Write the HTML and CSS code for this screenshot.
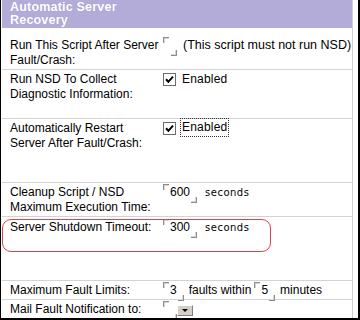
FILE: index.html
```html
<!DOCTYPE html>
<html lang="en">
<head>
    <meta charset="UTF-8">
    <title>Automatic Server Recovery</title>
    <link rel="stylesheet" href="styles.css">
</head>
<body>
    <div class="frame">
        <div class="panel">
            <div class="hd">Automatic Server<br>Recovery</div>

            <div class="row r1">
                <div class="lbl">Run This Script After Server<br>Fault/Crash:</div>
                <div class="val"><span class="fld"></span><span class="note">(This script must not run NSD)</span></div>
            </div>

            <div class="row r2">
                <div class="lbl">Run NSD To Collect<br>Diagnostic Information:</div>
                <div class="val">
                    <svg class="chk" width="13" height="13" viewBox="0 0 13 13"><rect x="0.5" y="0.5" width="12" height="12" fill="#fff" stroke="#6d6d6d"/><path d="M3 6.2 L5.4 8.8 L10 3.6" fill="none" stroke="#000" stroke-width="2"/></svg>
                    <span class="opt">Enabled</span>
                </div>
            </div>

            <div class="row r3">
                <div class="lbl">Automatically Restart<br>Server After Fault/Crash:</div>
                <div class="val">
                    <svg class="chk" width="13" height="13" viewBox="0 0 13 13"><rect x="0.5" y="0.5" width="12" height="12" fill="#fff" stroke="#6d6d6d"/><path d="M3 6.2 L5.4 8.8 L10 3.6" fill="none" stroke="#000" stroke-width="2"/></svg>
                    <span class="opt focus">Enabled</span>
                </div>
            </div>

            <div class="row r4">
                <div class="lbl">Cleanup Script / NSD<br>Maximum Execution Time:</div>
                <div class="val"><span class="fld">600</span><span class="unit">seconds</span></div>
            </div>

            <div class="row r5">
                <div class="lbl">Server Shutdown Timeout:</div>
                <div class="val"><span class="fld">300</span><span class="unit">seconds</span></div>
            </div>

            <div class="row r6">
                <div class="lbl">Maximum Fault Limits:</div>
                <div class="val"><span class="fld">3</span><span class="word">faults within</span><span class="fld">5</span><span class="word">minutes</span></div>
            </div>

            <div class="row r7">
                <div class="lbl">Mail Fault Notification to:</div>
                <div class="val"><span class="fld"></span><span class="drop"></span></div>
            </div>
        </div>
        <div class="callout"></div>
    </div>
</body>
</html>
```

FILE: styles.css
```css
* {
    margin: 0;
    padding: 0;
    box-sizing: border-box;
}
body {
    background: #fff;
    font-family: 'Liberation Sans', Arial, sans-serif;
    font-size: 12px;
    color: #000;
}
.frame {
    position: relative;
    width: 360px;
    height: 320px;
    border-left: 1px solid #000;
    border-right: 2px solid #000;
    border-bottom: 2px solid #000;
    padding-left: 1px;
    overflow: hidden;
}
.panel {
    width: 351px;
    border-right: 1px solid #cfcfcf;
    height: 318px;
}
.hd {
    height: 28px;
    background: #b3abd8;
    color: #fff;
    font-weight: bold;
    font-size: 12.5px;
    line-height: 13px;
    letter-spacing: 0.2px;
    padding: 1px 0 0 8px;
    text-shadow: 0 0 1px #9c93c6;
}
.row {
    display: flex;
    border-bottom: 1px solid #d3d3d3;
    padding-top: 2px;
    line-height: 15px;
}
.r1 { height: 42px; padding-top: 10px; }
.r2 { height: 49px; }
.r3 { height: 64px; }
.r4 { height: 34px; }
.r5 { height: 64px; padding-top: 3px; }
.r6 { height: 19px; }
.r7 { height: 18px; border-bottom: none; }
.lbl {
    width: 161px;
    padding-left: 8px;
    flex: none;
}
.val {
    display: flex;
    align-items: flex-start;
}
.fld {
    position: relative;
    display: inline-block;
    min-width: 14px;
    height: 15px;
    padding: 0 7px 0 7px;
}
.fld::before,
.fld::after {
    content: '';
    position: absolute;
    width: 5px;
    height: 5px;
}
.fld::before {
    left: 0;
    top: -1px;
    border-top: 1px solid #8c8c8c;
    border-left: 1px solid #8c8c8c;
    box-shadow: inset 1px 1px 0 #d6d6d6;
}
.fld::after {
    right: 0;
    bottom: -3px;
    border-bottom: 1px solid #8c8c8c;
    border-right: 1px solid #8c8c8c;
    box-shadow: inset -1px -1px 0 #d6d6d6;
}
.note {
    margin-left: 6px;
    font-size: 12.5px;
}
.chk {
    margin-top: 1px;
}
.opt {
    margin-left: 5px;
    padding: 0 1px;
    letter-spacing: 0.2px;
}
.focus {
    outline: 1px dotted #333;
    outline-offset: 0;
    margin-top: -2px;
    padding: 1px 1px;
}
.unit {
    margin-left: 8px;
    font-family: 'DejaVu Sans', sans-serif;
    font-size: 10px;
    letter-spacing: 0.5px;
}
.word {
    margin: 0 3px 0 5px;
}
.drop {
    display: inline-block;
    width: 16px;
    height: 11px;
    margin-top: 3px;
    background: #d4d0c8;
    border-top: 1px solid #fff;
    border-left: 1px solid #fff;
    border-right: 1px solid #808080;
    border-bottom: 1px solid #808080;
    position: relative;
}
.drop::after {
    content: '';
    position: absolute;
    left: 4px;
    top: 3px;
    border-left: 3px solid transparent;
    border-right: 3px solid transparent;
    border-top: 3px solid #000;
}
.callout {
    position: absolute;
    left: 1px;
    top: 219px;
    width: 269px;
    height: 33px;
    border: 1px solid #d8434e;
    border-radius: 9px;
    pointer-events: none;
}
```
